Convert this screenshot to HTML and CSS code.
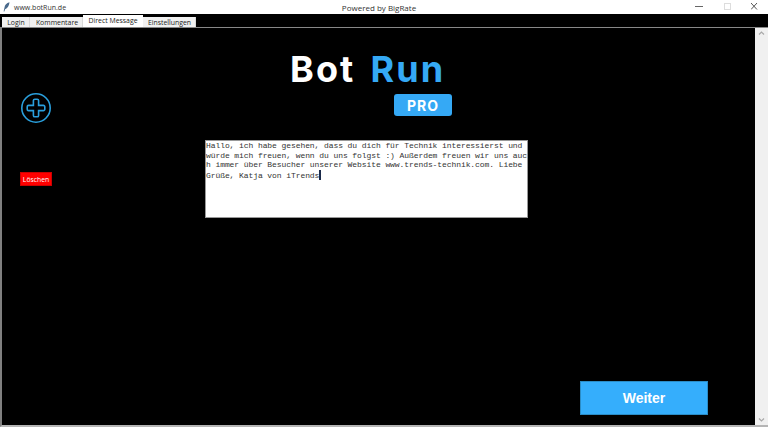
FILE: index.html
```html
<!DOCTYPE html>
<html lang="de">
<head>
<meta charset="utf-8">
<title>www.botRun.de</title>
<link rel="stylesheet" href="styles.css">
</head>
<body>
<div class="window">
  <header class="titlebar">
    <div class="title-left">
      <svg class="feather" width="7" height="10" viewBox="0 0 7 10"><path d="M6.5 0.3C3.5 0.8 1.8 3 1.4 6L0.6 9.6L1.4 9.6L2.1 7.2C4.6 6.6 6.1 3.6 6.5 0.3Z" fill="#4a6a8c"/></svg>
      <span>www.botRun.de</span>
    </div>
    <div class="title-center">Powered by BigRate</div>
    <div class="controls">
      <svg class="ctl" width="28" height="14" viewBox="0 0 28 14"><path d="M0 6.5H8" stroke="#666" stroke-width="1"/></svg>
      <svg class="ctl" width="28" height="14" viewBox="0 0 28 14"><rect x="1.5" y="3.5" width="6" height="6" fill="none" stroke="#ddd"/></svg>
      <svg class="ctl" width="17" height="14" viewBox="0 0 17 14"><path d="M0 3L6 9.5M6 3L0 9.5" stroke="#555" stroke-width="1"/></svg>
    </div>
  </header>
  <nav class="tabs">
    <div class="tab login">Login</div>
    <div class="tab comments">Kommentare</div>
    <div class="tab active">Direct Message</div>
    <div class="tab settings">Einstellungen</div>
  </nav>
  <div class="panel">
    <main class="canvas">
      <aside class="left">
        <svg class="plus" width="32" height="32" viewBox="0 0 32 32">
          <circle cx="16" cy="16" r="14.2" fill="none" stroke="#2a9fdc" stroke-width="1.6"/>
          <path d="M13.4 8.6a1.4 1.4 0 0 1 1.4-1.4h2.4a1.4 1.4 0 0 1 1.4 1.4v4.8h4.8a1.4 1.4 0 0 1 1.4 1.4v2.4a1.4 1.4 0 0 1-1.4 1.4h-4.8v4.8a1.4 1.4 0 0 1-1.4 1.4h-2.4a1.4 1.4 0 0 1-1.4-1.4v-4.8H8.6a1.4 1.4 0 0 1-1.4-1.4v-2.4a1.4 1.4 0 0 1 1.4-1.4h4.8z" fill="none" stroke="#2a9fdc" stroke-width="1.6"/>
        </svg>
        <div class="delete">Löschen</div>
      </aside>
      <section class="center">
        <div class="logo"><span class="bot">Bot</span><span class="run">Run</span></div>
        <div class="badge-row"><div class="badge">PRO</div></div>
        <div class="message">
          <span class="line">Hallo, ich habe gesehen, dass du dich für Technik interessierst und</span>
          <span class="line">würde mich freuen, wenn du uns folgst :) Außerdem freuen wir uns auc</span>
          <span class="line">h immer über Besucher unserer Website www.trends-technik.com. Liebe</span>
          <span class="line">Grüße, Katja von iTrends<span class="caret"></span></span>
        </div>
      </section>
      <section class="right">
        <div class="next">Weiter</div>
      </section>
    </main>
    <div class="scrollbar">
      <svg width="13" height="10" viewBox="0 0 13 10"><path d="M4 6.5L6.5 4L9 6.5" fill="none" stroke="#a8a8a8" stroke-width="1.2"/></svg>
      <svg width="13" height="10" viewBox="0 0 13 10"><path d="M4 3.5L6.5 6L9 3.5" fill="none" stroke="#a8a8a8" stroke-width="1.2"/></svg>
    </div>
  </div>
</div>
</body>
</html>
```
FILE: styles.css
```css
* { box-sizing: border-box; }
html, body { margin: 0; padding: 0; height: 100%; overflow: hidden; background: #000; }
body { font-family: "Open Sans", "Liberation Sans", sans-serif; }
.window { width: 768px; height: 427px; display: flex; flex-direction: column; background: #000; }

.titlebar { height: 14px; background: #fff; display: grid; grid-template-columns: 1fr auto 1fr; align-items: center; color: #333; }
.title-left { display: flex; align-items: center; gap: 4px; padding-left: 3px; font-size: 7px; }
.title-center { font-size: 8px; padding-right: 10px; }
.controls { display: flex; justify-content: flex-end; }
.ctl { display: block; }
.feather { display: block; }

.tabs { height: 13px; display: flex; align-items: flex-end; padding-left: 2px; background: #000; }
.tab { height: 10px; display: flex; align-items: center; justify-content: center; font-size: 6.9px; color: #222; background: #f0f0f0; border-right: 1px solid #d9d9d9; }
.tab.login { width: 28px; padding-left: 1px; }
.tab.comments { width: 53px; padding-left: 2px; }
.tab.active { width: 60px; height: 12px; background: #fff; border-right: 0; padding-bottom: 1px; }
.tab.settings { width: 53px; padding-left: 1px; }

.panel { flex: 1; display: flex; background: #000; border-top: 1px solid #888; border-left: 2px solid #808080; border-bottom: 2px solid #b5b5b5; min-height: 0; }
.canvas { flex: 1; display: flex; min-width: 0; background: #000; }

.left { width: 203px; display: flex; flex-direction: column; align-items: flex-start; padding: 64px 0 0 18px; }
.plus { display: block; }
.delete { margin-top: 48px; width: 32px; height: 14px; background: #f00; color: #fff; font-size: 6.8px; display: flex; align-items: center; justify-content: center; font-family: "Open Sans", sans-serif; border: 1px solid #c00; }

.center { width: 323px; display: flex; flex-direction: column; align-items: flex-start; }
.logo { margin: 18px 0 0 85px; height: 48px; line-height: 47px; display: flex; gap: 15px; font-family: "Inter", "Open Sans", sans-serif; font-weight: 700; font-size: 36px; letter-spacing: 2.1px; color: #fff; }
.logo .run { color: #35a9f5; }
.badge-row { margin: 0 0 0 189px; }
.badge { width: 58px; height: 22px; background: #35a9f5; border-radius: 3px; color: #fff; font-family: "Inter", sans-serif; font-weight: 700; font-size: 14px; letter-spacing: 1px; display: flex; align-items: center; justify-content: center; }
.message { margin-top: 24px; width: 323px; height: 78px; background: #fff; border: 1px solid #999; padding: 0; font-family: "Liberation Mono", monospace; font-size: 8px; letter-spacing: -0.08px; line-height: 9.5px; color: #333; }
.line { display: block; white-space: pre; }
.caret { display: inline-block; width: 2px; height: 10px; background: #1a2a4a; vertical-align: -2px; }

.right { flex: 1; display: flex; flex-direction: column; justify-content: flex-end; padding: 0 45px 10px 52px; }
.next { width: 128px; height: 34px; background: #35aefc; border: 1px solid #2b8cc6; color: #fff; font-family: "Liberation Sans", sans-serif; font-weight: 700; font-size: 14px; display: flex; align-items: center; justify-content: center; }

.scrollbar { width: 13px; background: #f0f0f0; display: flex; flex-direction: column; justify-content: space-between; }
.scrollbar svg { display: block; }
```
